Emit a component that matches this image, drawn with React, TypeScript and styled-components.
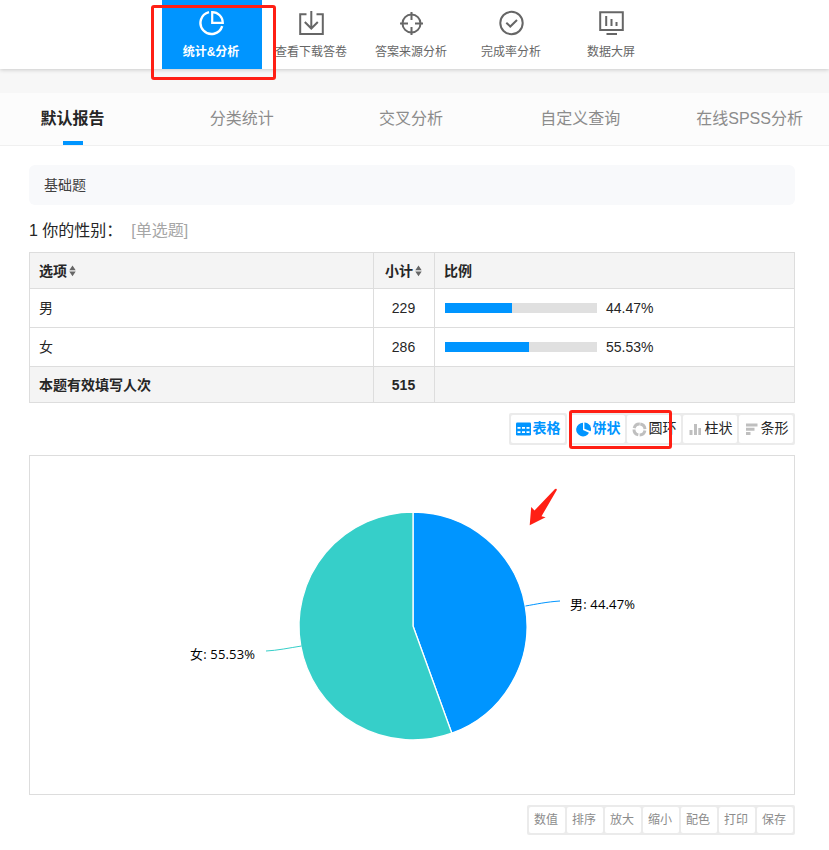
import React from "react";
import styled, { createGlobalStyle, css } from "styled-components";

const BLUE = "#0095ff";
const TEAL = "#36cfc9";
const RED = "#ff1f14";
const LINE = "#dddddd";

const GlobalStyle = createGlobalStyle`
  * { box-sizing: border-box; }
  body {
    margin: 0;
    background: #fff;
    color: #262626;
    font-family: "Liberation Sans", "Noto Sans CJK SC", sans-serif;
    font-size: 14px;
  }
`;

const Page = styled.div`
  position: relative;
  width: 829px;
  height: 850px;
  overflow: hidden;
  background: #fff;
`;

const TopNav = styled.nav`
  position: relative;
  display: flex;
  height: 69px;
  padding-left: 162px;
  background: #fff;
  box-shadow: 0 1px 4px rgba(0, 0, 0, 0.18);
`;

const NavItem = styled.a<{ $active?: boolean }>`
  display: flex;
  flex-direction: column;
  align-items: center;
  flex: none;
  width: 100px;
  padding: 10px 2px 0 0;
  color: ${(p) => (p.$active ? "#fff" : "#666")};
  background: ${(p) => (p.$active ? BLUE : "transparent")};
  font-size: 12px;
  font-weight: ${(p) => (p.$active ? 700 : 400)};
  line-height: 18px;
  white-space: nowrap;

  svg {
    display: block;
    flex: none;
    margin-bottom: 7px;
  }
`;

const Band = styled.div`
  height: 24px;
  background: #f7f7f7;
`;

const TabStrip = styled.div`
  overflow: hidden;
`;

const Tabs = styled.div`
  display: grid;
  grid-template-columns: repeat(5, 169.25px);
  height: 53px;
  margin-left: -12px;
  background: #fcfcfc;
  border-bottom: 1px solid #f0f0f0;
`;

const Tab = styled.div<{ $active?: boolean }>`
  display: flex;
  flex-direction: column;
  align-items: center;
  justify-content: space-between;
  padding-top: 14px;
  font-size: 16px;
  line-height: 24px;
  color: ${(p) => (p.$active ? "#262626" : "#8c8c8c")};
  font-weight: ${(p) => (p.$active ? 700 : 400)};

  ${(p) =>
    p.$active &&
    css`
      &::after {
        content: "";
        width: 20px;
        height: 4px;
        background: ${BLUE};
      }
    `}
`;

const Content = styled.main`
  width: 766px;
  margin: 19px 0 0 29px;
`;

const Section = styled.h2`
  height: 40px;
  margin: 0;
  padding-left: 15px;
  border-radius: 6px;
  background: #f8f9fb;
  color: #404040;
  font-size: 14px;
  font-weight: 400;
  line-height: 40px;
`;

const Question = styled.div`
  display: flex;
  gap: 10px;
  height: 47px;
  padding-top: 14px;
  font-size: 16px;
  line-height: 24px;
`;

const Kind = styled.span`
  margin-left: -1px;
  color: #a6a6a6;
`;

const Table = styled.div`
  border: 1px solid ${LINE};
`;

const Row = styled.div<{ $shade?: boolean }>`
  display: grid;
  grid-template-columns: 343px 61px 1fr;
  height: ${(p) => (p.$shade ? 35 : 38)}px;
  background: ${(p) => (p.$shade ? "#f4f4f4" : "#fff")};
  font-weight: ${(p) => (p.$shade ? 700 : 400)};

  & + & {
    box-sizing: content-box;
    border-top: 1px solid ${LINE};
  }
`;

const Cell = styled.div<{ $center?: boolean }>`
  display: flex;
  align-items: center;
  justify-content: ${(p) => (p.$center ? "center" : "flex-start")};
  padding: ${(p) => (p.$center ? "0 1px 0 0" : "0 0 0 9px")};
  line-height: 20px;
  white-space: nowrap;

  & + & {
    border-left: 1px solid ${LINE};
  }
`;

const SortIcon = styled.svg`
  margin: 0 0 0 2px;
  fill: #666;
`;

const Track = styled.div`
  width: 152px;
  height: 10px;
  margin: 0 9px 0 1px;
  background: #e0e0e0;
`;

const Fill = styled.div`
  height: 10px;
  background: ${BLUE};
`;

const ChartSwitch = styled.div`
  display: flex;
  justify-content: flex-end;
  gap: 2px;
  margin: 10px 0;
`;

const ButtonGroup = styled.div`
  display: flex;
  gap: 2px;
  padding: 2px;
  border-radius: 2px;
  background: #ebebeb;
`;

const ChartButton = styled.button<{ $active?: boolean }>`
  display: flex;
  align-items: center;
  width: 54px;
  height: 28px;
  padding: 0 0 0 5px;
  gap: 1.5px;
  border: 0;
  border-radius: 2px;
  background: #fff;
  color: ${(p) => (p.$active ? BLUE : "#262626")};
  font: inherit;
  font-weight: ${(p) => (p.$active ? 700 : 400)};
  line-height: 20px;
  white-space: nowrap;

  svg {
    flex: none;
    color: ${(p) => (p.$active ? BLUE : "#bfbfbf")};
  }
  span {
    padding-bottom: 2px;
  }
`;

const ChartBox = styled.div`
  height: 340px;
  border: 1px solid ${LINE};

  svg {
    display: block;
  }
  text {
    font-family: "Open Sans", "Noto Sans CJK SC", sans-serif;
    font-size: 13px;
    fill: #000;
  }
`;

const Tools = styled.div`
  display: flex;
  justify-content: flex-end;
  margin-top: 10px;
`;

const ToolButton = styled.button`
  width: 36px;
  height: 26px;
  padding: 0 2px 0 0;
  border: 0;
  border-radius: 2px;
  background: #fff;
  color: #8c8c8c;
  font-family: inherit;
  font-size: 12px;
  line-height: 26px;
`;

const Mark = styled.div<{ $x: number; $y: number; $w: number; $h: number }>`
  position: absolute;
  left: ${(p) => p.$x}px;
  top: ${(p) => p.$y}px;
  width: ${(p) => p.$w}px;
  height: ${(p) => p.$h}px;
  border: 3px solid ${RED};
  border-radius: 3px;
`;

const Arrow = styled.svg`
  position: absolute;
  left: 528px;
  top: 487px;
  fill: ${RED};
`;

const NavSvg = ({ children }: { children: React.ReactNode }) => (
  <svg width="26" height="26" viewBox="0 0 26 26" fill="none" stroke="currentColor" strokeWidth="2">
    {children}
  </svg>
);

const navItems = [
  {
    label: "统计&分析",
    icon: (
      <>
        <path d="M11 2.1A11.1 11.1 0 1 0 24.2 16.2" strokeWidth="2.4" />
        <path d="M14.2 2.2V12.8H24.8A10.6 10.6 0 0 0 14.2 2.2Z" strokeWidth="2.2" />
      </>
    ),
  },
  {
    label: "查看下载答卷",
    icon: (
      <>
        <path d="M8.5 4.2H2.2V24H24.8V4.2H18.5" />
        <path d="M13.3 1V18.3M6.8 12L13.3 18.5L19.8 12" />
      </>
    ),
  },
  {
    label: "答案来源分析",
    icon: (
      <>
        <circle cx="13.5" cy="13.5" r="9" />
        <path d="M13.5 2V10M13.5 17V25M2 13.5H10M17 13.5H25" />
      </>
    ),
  },
  {
    label: "完成率分析",
    icon: (
      <>
        <circle cx="13.5" cy="13" r="11.2" />
        <path d="M8.3 12.7L12.3 16.5L19 10" />
      </>
    ),
  },
  {
    label: "数据大屏",
    icon: (
      <>
        <path d="M2.2 2.2H24.8V20H2.2ZM8.5 24H19" />
        <path d="M8.2 6V16M13.5 9V16M18.5 12V16" />
      </>
    ),
  },
];

const Sort = () => (
  <SortIcon width="7" height="12" viewBox="0 0 7 12">
    <path d="M3.5 0.5L6.7 5.2H0.3ZM3.5 11.3L6.7 6.6H0.3Z" />
  </SortIcon>
);

const icons = {
  table: (
    <svg width="15" height="14" viewBox="0 0 15 14">
      <rect width="15" height="13" y=".5" rx="1.3" fill="currentColor" />
      <path d="M1.5 5H4.5V6.7H1.5ZM6 5H9V6.7H6ZM10.5 5H13.5V6.7H10.5ZM1.5 9.2H4.5V10.9H1.5ZM6 9.2H9V10.9H6ZM10.5 9.2H13.5V10.9H10.5Z" fill="#fff" />
    </svg>
  ),
  pie: (
    <svg width="15" height="15" viewBox="0 0 15 15" fill="currentColor">
      <path d="M7 .8A6.8 6.8 0 1 0 13 10.8L7 8Z" />
      <path d="M8.4 .4A6.6 6.6 0 0 1 14.6 9.3L8.4 6.8Z" />
    </svg>
  ),
  ring: (
    <svg width="15" height="15" viewBox="0 0 15 15" fill="none" stroke="currentColor">
      <circle cx="7.5" cy="7.5" r="5.5" strokeWidth="3" strokeDasharray="7.24 1.4" transform="rotate(-82 7.5 7.5)" />
    </svg>
  ),
  column: (
    <svg width="15" height="14" viewBox="0 0 15 14" fill="currentColor">
      <path d="M1.5 8H4.5V13H1.5ZM6 2H9V13H6ZM10.3 6H13V13H10.3Z" />
    </svg>
  ),
  bar: (
    <svg width="15" height="14" viewBox="0 0 15 14" fill="currentColor">
      <path d="M2 1.5H13.5V4.5H2ZM2 5.8H10.5V8.8H2ZM2 10.1H6.5V13H2Z" />
    </svg>
  ),
};

const answers = [
  { name: "男", count: 229, percent: 44.47, bar: 67 },
  { name: "女", count: 286, percent: 55.53, bar: 84 },
];

const tabs = ["默认报告", "分类统计", "交叉分析", "自定义查询", "在线SPSS分析"];
const tools = ["数值", "排序", "放大", "缩小", "配色", "打印", "保存"];

function PieChart() {
  const cx = 383;
  const cy = 170;
  const r = 114;
  const angle = 0.4447 * Math.PI * 2;
  const ex = cx + r * Math.sin(angle);
  const ey = cy - r * Math.cos(angle);
  return (
    <svg width="764" height="338" viewBox="0 0 764 338">
      <g stroke="#fff" strokeWidth="1.3" strokeLinejoin="round">
        <path d={`M${cx} ${cy}V${cy - r}A${r} ${r} 0 0 1 ${ex} ${ey}Z`} fill={BLUE} />
        <path d={`M${cx} ${cy}L${ex} ${ey}A${r} ${r} 0 1 1 ${cx} ${cy - r}Z`} fill={TEAL} />
      </g>
      <path d="M495.5 150C507 148 516 146 530 145" fill="none" stroke={BLUE} />
      <path d="M236 195C247 194.5 259 192 271.5 190" fill="none" stroke={TEAL} />
      <text x="540" y="152.5" textLength="65">男: 44.47%</text>
      <text x="160" y="202.5" textLength="65">女: 55.53%</text>
    </svg>
  );
}

export default function App() {
  return (
    <>
      <GlobalStyle />
      <Page>
        <TopNav>
          {navItems.map((item, i) => (
            <NavItem key={item.label} $active={i === 0}>
              <NavSvg>{item.icon}</NavSvg>
              {item.label}
            </NavItem>
          ))}
        </TopNav>
        <Band />
        <TabStrip>
          <Tabs>
            {tabs.map((t, i) => (
              <Tab key={t} $active={i === 0}>{t}</Tab>
            ))}
          </Tabs>
        </TabStrip>
        <Content>
          <Section>基础题</Section>
          <Question>
            <span>1 你的性别：</span>
            <Kind>[单选题]</Kind>
          </Question>
          <Table>
            <Row $shade>
              <Cell>选项<Sort /></Cell>
              <Cell $center>小计<Sort /></Cell>
              <Cell>比例</Cell>
            </Row>
            {answers.map((a) => (
              <Row key={a.name}>
                <Cell>{a.name}</Cell>
                <Cell $center>{a.count}</Cell>
                <Cell>
                  <Track>
                    <Fill style={{ width: a.bar }} />
                  </Track>
                  {a.percent}%
                </Cell>
              </Row>
            ))}
            <Row $shade>
              <Cell>本题有效填写人次</Cell>
              <Cell $center>515</Cell>
              <Cell />
            </Row>
          </Table>
          <ChartSwitch>
            <ButtonGroup>
              <ChartButton $active>{icons.table}<span>表格</span></ChartButton>
            </ButtonGroup>
            <ButtonGroup>
              <ChartButton $active>{icons.pie}<span>饼状</span></ChartButton>
              <ChartButton>{icons.ring}<span>圆环</span></ChartButton>
              <ChartButton>{icons.column}<span>柱状</span></ChartButton>
              <ChartButton>{icons.bar}<span>条形</span></ChartButton>
            </ButtonGroup>
          </ChartSwitch>
          <ChartBox>
            <PieChart />
          </ChartBox>
          <Tools>
            <ButtonGroup>
              {tools.map((t) => (
                <ToolButton key={t}>{t}</ToolButton>
              ))}
            </ButtonGroup>
          </Tools>
        </Content>
        <Mark $x={151} $y={5} $w={125} $h={75} />
        <Mark $x={569} $y={410} $w={103} $h={39} />
        <Arrow width="32" height="40" viewBox="0 0 32 40">
          <path d="M27 2Q29 1 28.8 3L13.5 29.3L17.6 30.3L1.7 38.3L3.2 20L6.5 23.5Z" />
        </Arrow>
      </Page>
    </>
  );
}
